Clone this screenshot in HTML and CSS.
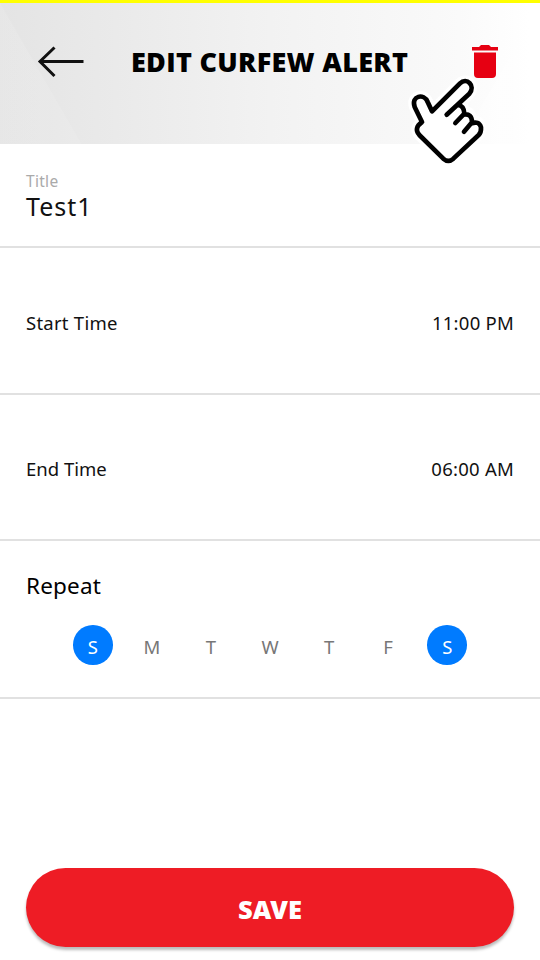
FILE: index.html
```html
<!DOCTYPE html>
<html lang="en">
<head>
<meta charset="utf-8">
<title>Edit Curfew Alert</title>
<link rel="stylesheet" href="styles.css">
</head>
<body>
<main class="screen">
  <header class="header">
    <svg class="back" width="48" height="34" viewBox="0 0 48 34"><path d="M17.5 2.5 3 16.5 17.5 31M3 16.5H46.5"/></svg>
    <h1 class="heading">EDIT CURFEW ALERT</h1>
    <svg class="trash" width="26" height="33" viewBox="0 0 26 33"><path d="M0 2H7L9 0H17L19 2H26V5.5H0ZM2 7.5H24V29Q24 33 20 33H6Q2 33 2 29Z"/></svg>
    <svg class="hand" width="82" height="94" viewBox="30 137 246 282">
      <path class="halo" d="M66 275 44 230C32 196 72 188 83 215L96 243 180 159C200 140 228 166 208 190L174 224Q192 226 193 244Q214 246 216 271Q237 270 243 291Q244 306 236 314L160 385Q145 398 130 385L58 314Q40 294 66 275Z"/>
      <path class="line" d="M66 275 44 230C32 196 72 188 83 215L96 243 180 159C200 140 228 166 208 190L140 253M174 224Q192 226 193 250L166 278M190 253Q216 248 216 276L192 304M213 280Q237 270 243 291Q244 306 236 314L160 385Q145 398 130 385L58 314Q40 294 66 275"/>
    </svg>
  </header>
  <section class="field">
    <div class="label">Title</div>
    <div class="value">Test1</div>
  </section>
  <section class="row"><span class="start">Start Time</span><span class="time">11:00 PM</span></section>
  <section class="row"><span class="end">End Time</span><span class="time">06:00 AM</span></section>
  <section class="repeat">
    <h2 class="subhead">Repeat</h2>
    <div class="days">
      <span class="day selected">S</span><span class="day">M</span><span class="day">T</span><span class="day">W</span><span class="day">T</span><span class="day">F</span><span class="day selected">S</span>
    </div>
  </section>
  <button class="save">SAVE</button>
</main>
</body>
</html>
```
FILE: styles.css
```css
* { box-sizing: border-box; }
body { margin: 0; background: #fff; color: #111; font-family: "Noto Sans", "Open Sans", sans-serif; }
.screen { width: 540px; height: 960px; display: flex; flex-direction: column; overflow: hidden; }
.header {
  position: relative; height: 144px; flex: none; display: flex; align-items: flex-start;
  padding: 42px 42px 0 37px; border-top: 3px solid #ff0;
  background:
    linear-gradient(60deg, rgba(255,255,255,.1) 70px, transparent 71px),
    linear-gradient(120deg, transparent 468px, rgba(255,255,255,.4) 469px),
    linear-gradient(90deg, #e4e4e4, #f2f2f2 50%, #fafafa 85%, #fff 98%);
}
.back { fill: none; stroke: #111; stroke-width: 3; flex: none; }
.heading { width: 280px; margin: -3px 0 0 46px; font-family: "Open Sans", sans-serif; font-size: 27px; line-height: 39px; font-weight: 800; letter-spacing: .3px; white-space: nowrap; color: #000; }
.trash { margin-left: 61px; fill: #e60012; flex: none; }
.hand { position: absolute; left: 409.5px; top: 73px; overflow: visible; stroke-linecap: round; stroke-linejoin: round; }
.halo { fill: #fff; stroke: #fff; stroke-width: 34px; }
.line { fill: none; stroke: #000; stroke-width: 14px; }
.field { height: 104px; flex: none; padding: 25px 26px 0; border-bottom: 2px solid #e1e1e1; }
.label { font-size: 15.5px; line-height: 24px; letter-spacing: .3px; color: #aaa; }
.value { font-size: 25px; line-height: 26px; letter-spacing: 1px; }
.row { height: 146.5px; flex: none; display: flex; align-items: center; justify-content: space-between; padding: 4px 26px 0; border-bottom: 2px solid #e1e1e1; font-size: 18.5px; }
.start { letter-spacing: .25px; }
.time { letter-spacing: .25px; }
.repeat { height: 158px; flex: none; padding: 30px 26px 0; border-bottom: 2px solid #e1e1e1; }
.subhead { margin: 0; font-size: 22.5px; line-height: 30px; font-weight: 400; letter-spacing: .2px; color: #000; }
.days { display: flex; justify-content: space-between; margin: 24px 47px 0; }
.day { width: 39.5px; height: 39.5px; padding-top: 3px; border-radius: 50%; text-align: center; line-height: 38px; font-size: 18.5px; color: #777; }
.selected { background: #007bff; color: #fff; }
.save { height: 78.5px; flex: none; margin: 169px 26px 0; padding: 3px 0 0; border: 0; border-radius: 40px; background: #ee1c25; color: #fff; font-family: inherit; font-size: 25.5px; font-weight: 900; box-shadow: 0 3px 3px #bbb; }
```
